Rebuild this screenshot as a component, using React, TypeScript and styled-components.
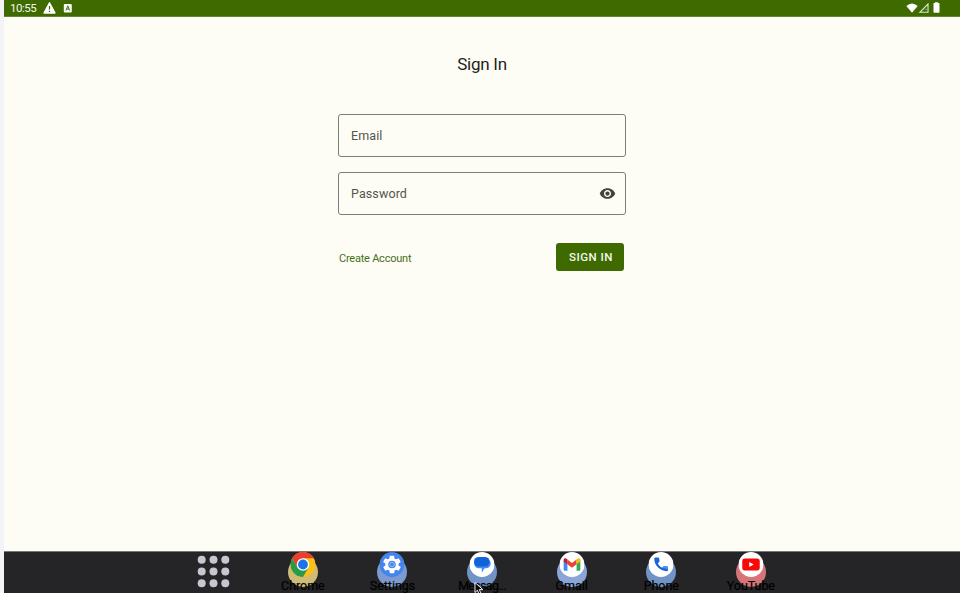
import React from "react";
import styled, { createGlobalStyle } from "styled-components";

const GlobalStyle = createGlobalStyle`
  * { box-sizing: border-box; }
  body { margin: 0; overflow: hidden; font-family: Roboto, sans-serif; }
  button, input { font-family: inherit; }
`;

const Screen = styled.div`
  width: 960px;
  height: 593px;
  display: flex;
  flex-direction: column;
  overflow: hidden;
  background: #fefdf5;
  border-left: 4px solid #f3f4f7;
`;

const StatusBar = styled.header`
  height: 17px;
  flex: none;
  display: flex;
  align-items: center;
  justify-content: space-between;
  padding: 0 20px 1px 6px;
  background: #3e6a00;
  border-bottom: 1px solid #64863a;
  color: #f4f8ec;
`;

const StatusGroup = styled.div<{ $gap: number }>`
  display: flex;
  align-items: center;
  gap: ${(p) => p.$gap}px;
  svg { display: block; }
`;

const Clock = styled.span`
  width: 26px;
  font-size: 11.5px;
  line-height: 14px;
  letter-spacing: -0.5px;
  padding-top: 1px;
`;

const Main = styled.main`
  flex: 1;
  display: flex;
  flex-direction: column;
  align-items: center;
  padding-top: 36px;
`;

const Title = styled.h1`
  margin: 0 0 39px;
  height: 22px;
  font-size: 17px;
  line-height: 22px;
  font-weight: 400;
  letter-spacing: -0.25px;
  color: #1d1e1a;
`;

const Form = styled.form`
  width: 288px;
  display: flex;
  flex-direction: column;
  gap: 15px;
`;

const Field = styled.div`
  height: 43px;
  display: flex;
  align-items: center;
  justify-content: space-between;
  padding: 0 9px 0 12px;
  border: 1px solid #7d7e78;
  border-radius: 3px;
  color: #53544e;
  font-size: 12.5px;
  letter-spacing: 0.1px;
  svg { display: block; }
`;

const Actions = styled.div`
  margin-top: 13px;
  padding: 0 2px 0 1px;
  height: 28px;
  display: flex;
  align-items: center;
  justify-content: space-between;
`;

const TextLink = styled.a`
  color: #44701a;
  font-size: 11px;
  letter-spacing: -0.23px;
  padding-top: 2px;
`;

const SubmitButton = styled.button`
  width: 68px;
  height: 28px;
  padding: 0 0 0 2px;
  border: 0;
  border-radius: 3px;
  background: #3e6a00;
  color: #f4f8ec;
  font-size: 11.5px;
  font-weight: 500;
  letter-spacing: 0.5px;
`;

const Dock = styled.nav`
  height: 42px;
  flex: none;
  display: grid;
  grid-template-columns: repeat(7, 89.6px);
  padding-left: 164.5px;
  background: #252527;
  border-top: 1px solid #77777a;
`;

const DockItem = styled.div`
  position: relative;
  display: flex;
  flex-direction: column;
  align-items: center;
`;

const Halo = styled.div<{ $color: string }>`
  width: 30px;
  height: 30px;
  margin-top: 5px;
  border-radius: 50%;
  background: ${(p) => p.$color};
`;

const AppIcon = styled.svg`
  position: absolute;
  top: 0;
  left: 50%;
  width: 25px;
  height: 25px;
  transform: translateX(-50%);
`;

const AppLabel = styled.span<{ $tight: boolean }>`
  position: absolute;
  top: 26px;
  left: 0;
  right: 0;
  text-align: center;
  font-size: 12.5px;
  line-height: 16px;
  letter-spacing: ${(p) => (p.$tight ? "-0.7px" : "-0.05px")};
  color: #000;
  -webkit-text-stroke: 0.2px #000;
`;

const AllApps = styled.svg`
  width: 33px;
  height: 33px;
  margin-top: 3px;
`;

const Pointer = styled.svg`
  position: absolute;
  left: 37px;
  top: 30px;
`;

const Chrome = () => (
  <>
    <circle cx="12" cy="12" r="12" fill="#fbc116" />
    <path d="M1.6 6A12 12 0 0 1 22.4 6H12L6.8 15Z" fill="#ea3e30" />
    <path d="M1.6 6A12 12 0 0 0 12 24L17.2 15L12 12L6.8 15Z" fill="#299b48" />
    <circle cx="12" cy="12" r="6" fill="#fff" />
    <circle cx="12" cy="12" r="4.7" fill="#1a73e8" />
  </>
);

const Settings = () => (
  <>
    <circle cx="12" cy="12" r="12" fill="#4385ed" />
    <g transform="translate(1.8 1.8) scale(.85)">
      <path
        fill="#fff"
        fillRule="evenodd"
        d="M19.4 13a7.5 7.5 0 0 0 0-2l2.1-1.6c.2-.2.3-.5.1-.7l-2-3.4c-.1-.2-.4-.3-.6-.2l-2.5 1a7 7 0 0 0-1.7-1l-.4-2.6c0-.3-.2-.5-.5-.5h-4c-.3 0-.5.2-.5.5L9 5.1a8 8 0 0 0-1.7 1l-2.5-1c-.2-.1-.5 0-.6.2l-2 3.4c-.1.2-.1.5.1.7L4.5 11a8 8 0 0 0 0 2l-2.1 1.6c-.2.2-.2.5-.1.7l2 3.4c.1.2.4.3.6.2l2.5-1a7 7 0 0 0 1.7 1l.4 2.6c0 .3.2.5.5.5h4c.3 0 .5-.2.5-.5l.4-2.6a8 8 0 0 0 1.7-1l2.5 1c.2.1.5 0 .6-.2l2-3.4c.1-.2.1-.5-.1-.7ZM12 7.700a4.300 4.300 0 1 0 0 8.600a4.300 4.300 0 1 0 0-8.600Z"
      />
      <circle cx="12" cy="12" r="2.600" fill="none" stroke="#fff" strokeWidth=".5" />
    </g>
  </>
);

const Messages = () => (
  <>
    <circle cx="12" cy="12" r="12" fill="#fff" />
    <path d="M9 6.500H15.800A4.600 4.600 0 0 1 15.800 15.700H14.500L11.800 19.900V15.700H9A4.600 4.600 0 0 1 9 6.500Z" fill="#3f8ef5" />
    <rect x="4.300" y="4.700" width="15" height="9.300" rx="4.650" fill="#1263da" />
  </>
);

const Gmail = () => (
  <>
    <circle cx="12" cy="12" r="12" fill="#fff" />
    <path d="M4 8L7.600 10.500V18H5.200Q4 18 4 16.800Z" fill="#4285f4" />
    <path d="M20 8L16.400 10.500V18H18.800Q20 18 20 16.800Z" fill="#34a853" />
    <path d="M7.600 7.200L12 10.500L16.400 7.200V11.800L12 15L7.600 11.800Z" fill="#ea4335" />
    <path d="M4 7.700C4 5.700 6 5.300 7.600 7.200V11.800L4 9.200Z" fill="#c5221f" />
    <path d="M20 7.700C20 5.700 18 5.300 16.400 7.200V11.800L20 9.200Z" fill="#fbbc04" />
  </>
);

const Phone = () => (
  <>
    <circle cx="12" cy="12" r="12" fill="#fff" />
    <path
      d="M6.700 5.200H9.300Q10.100 5.200 10.200 6L10.600 8.600Q10.700 9.200 10.200 9.700L8.900 11Q10.400 13.800 13 15.200L14.400 13.800Q14.900 13.400 15.500 13.500L17.900 14Q18.700 14.200 18.700 15V17.400Q18.700 18.500 17.600 18.500C10.600 18 5.700 13 5.500 6.500Q5.500 5.200 6.700 5.200Z"
      fill="#1766db"
    />
    <path d="M13 15.200L14.400 13.800Q14.900 13.400 15.500 13.500L17.900 14Q18.700 14.200 18.700 15V16.500Z" fill="#4b91f5" />
  </>
);

const YouTube = () => (
  <>
    <circle cx="12" cy="12" r="12" fill="#fff" />
    <rect x="3.600" y="6.200" width="16.800" height="11.600" rx="2.600" fill="#fa0808" />
    <path d="M10.300 9.500L14.600 12L10.300 14.500Z" fill="#fff" />
  </>
);

const apps = [
  { name: "Chrome", halo: "#cfba76", Icon: Chrome },
  { name: "Settings", halo: "#7e9bcf", Icon: Settings },
  { name: "Messag...", halo: "#7293c6", Icon: Messages },
  { name: "Gmail", halo: "#8aa5d6", Icon: Gmail },
  { name: "Phone", halo: "#7293c6", Icon: Phone },
  { name: "YouTube", halo: "#d67578", Icon: YouTube },
];

const gridSteps = [4.7, 16.5, 28.3];

export default function App() {
  return (
    <>
      <GlobalStyle />
      <Screen>
        <StatusBar>
          <StatusGroup $gap={7}>
            <Clock>10:55</Clock>
            <svg width="13" height="12" viewBox="0 0 13 12">
              <path d="M6.500 .9L12 11H1Z" fill="#fff" stroke="#fff" strokeWidth="1.400" strokeLinejoin="round" />
              <path d="M6.500 4V7.600M6.500 8.800V10.100" stroke="#3e6a00" strokeWidth="1.200" />
            </svg>
            <svg width="9" height="10" viewBox="0 0 9 10">
              <rect x=".8" y="1" width="8" height="8.500" rx="1" fill="#f8faf4" />
              <path d="M3 7.500L4.800 2.800L6.600 7.500M3.600 6H6" fill="none" stroke="#3e6a00" strokeWidth=".9" />
            </svg>
          </StatusGroup>
          <StatusGroup $gap={0}>
            <svg width="12" height="10" viewBox="0 0 12 10">
              <path d="M.3 3Q6-2 11.700 3L6 9.800Z" fill="#fff" />
            </svg>
            <svg width="11" height="10" viewBox="0 0 11 10">
              <path d="M1.800 9.300L10 1V9.300Z" fill="none" stroke="#dfe8d2" strokeWidth="1.100" />
              <path d="M6.500 6.300H9.500" fill="none" stroke="#8aa565" strokeWidth="1" />
            </svg>
            <svg width="11" height="11" viewBox="0 0 11 11">
              <path d="M5 1H6V.3H9V1H10Q10.500 1 10.500 1.600V10Q10.500 10.700 9.900 10.700H5.100Q4.500 10.700 4.500 10V1.600Q4.500 1 5 1Z" fill="#fff" />
            </svg>
          </StatusGroup>
        </StatusBar>

        <Main>
          <Title>Sign In</Title>
          <Form>
            <Field>Email</Field>
            <Field>
              Password
              <svg width="17" height="17" viewBox="0 0 24 24">
                <path
                  fill="#42433e"
                  d="M12 4.500C7 4.500 2.730 7.610 1 12c1.730 4.390 6 7.500 11 7.500s9.270-3.110 11-7.500c-1.730-4.390-6-7.500-11-7.500zM12 17c-2.760 0-5-2.240-5-5s2.240-5 5-5 5 2.240 5 5-2.240 5-5 5zm0-8c-1.660 0-3 1.340-3 3s1.340 3 3 3 3-1.340 3-3-1.340-3-3-3z"
                />
              </svg>
            </Field>
            <Actions>
              <TextLink>Create Account</TextLink>
              <SubmitButton type="button">SIGN IN</SubmitButton>
            </Actions>
          </Form>
        </Main>

        <Dock>
          <DockItem>
            <AllApps viewBox="0 0 33 33">
              {gridSteps.map((y) =>
                gridSteps.map((x) => <circle key={`${x}-${y}`} cx={x} cy={y} r="4" fill="#c8c7d1" />)
              )}
            </AllApps>
          </DockItem>
          {apps.map(({ name, halo, Icon }) => (
            <DockItem key={name}>
              <Halo $color={halo} />
              <AppIcon viewBox="0 0 24 24">
                <Icon />
              </AppIcon>
              <AppLabel $tight={name.endsWith("...")}>{name}</AppLabel>
              {name === "Messag..." && (
                <Pointer width="10" height="13" viewBox="0 0 10 13">
                  <path d="M1 .5V10.500L3.400 8.200L5.200 12.300L7 11.500L5.300 7.600H8.800Z" fill="#050505" stroke="#fff" strokeWidth=".9" />
                </Pointer>
              )}
            </DockItem>
          ))}
        </Dock>
      </Screen>
    </>
  );
}
